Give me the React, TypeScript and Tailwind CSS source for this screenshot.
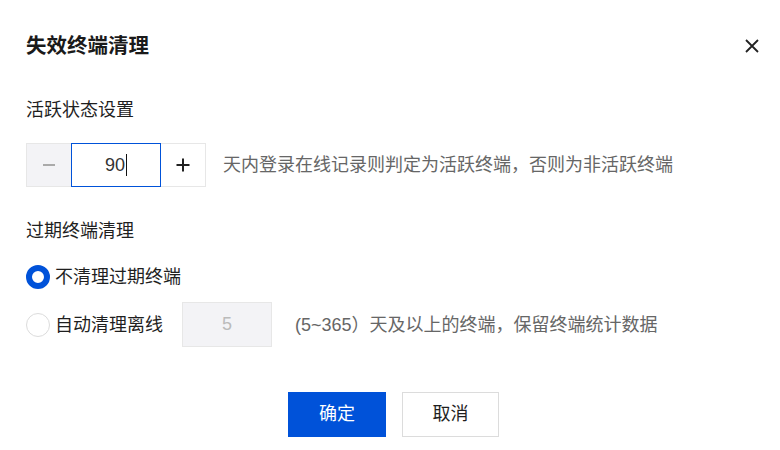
const font = "font-['Liberation_Sans','Noto_Sans_CJK_SC',sans-serif]";

const CloseIcon = () => (
  <svg width="16" height="16" viewBox="0 0 16 16" fill="none">
    <path d="M2 2L14 14M14 2L2 14" stroke="#222" strokeWidth="1.8" />
  </svg>
);

const Radio = ({ checked, label }: { checked?: boolean; label: string }) => (
  <div className="flex items-center gap-[5px]">
    {checked ? (
      <span className="h-6 w-6 rounded-full border-[6px] border-[#0052d9] bg-white" />
    ) : (
      <span className="h-6 w-6 rounded-full border border-[#dcdcdc] bg-white" />
    )}
    <span className="text-[18px] leading-[26px] text-[#1f1f1f]">{label}</span>
  </div>
);

export default function App() {
  return (
    <div className={`${font} h-[450px] w-[780px] bg-white`}>
      <div className="flex items-center justify-between pl-[26px] pr-[20px] pt-[32px]">
        <h1 className="text-[20.5px] font-bold leading-[28px] text-[#1a1a1a]">失效终端清理</h1>
        <CloseIcon />
      </div>

      <div className="px-[26px]">
        <div className="mt-[37px] text-[18px] leading-[26px] text-[#1f1f1f]">活跃状态设置</div>

        <div className="mt-[20px] flex items-center">
          <div className="flex h-[44px]">
            <div className="flex w-[45px] items-center justify-center border border-r-0 border-[#e7e7e7] bg-[#f3f3f6]">
              <span className="h-[2px] w-[12px] bg-[#aaaaaa]" />
            </div>
            <div className="flex w-[90px] items-center justify-center border border-[#0052d9] bg-white">
              <span className="text-[18px] text-[#333]">90</span>
              <span className="ml-[1px] h-[22px] w-px bg-[#111]" />
            </div>
            <div className="flex w-[45px] items-center justify-center border border-l-0 border-[#e7e7e7] bg-white">
              <svg width="14" height="14" viewBox="0 0 14 14">
                <path d="M7 0.5V13.5M0.5 7H13.5" stroke="#222" strokeWidth="2" />
              </svg>
            </div>
          </div>
          <span className="ml-[17px] text-[18px] leading-[26px] text-[#666]">
            天内登录在线记录则判定为活跃终端，否则为非活跃终端
          </span>
        </div>

        <div className="mt-[31px] text-[18px] leading-[26px] text-[#1f1f1f]">过期终端清理</div>

        <div className="mt-[20px]">
          <Radio checked label="不清理过期终端" />
        </div>

        <div className="mt-[12px] flex items-center">
          <Radio label="自动清理离线" />
          <div className="ml-[19px] flex h-[45px] w-[90px] items-center justify-center border border-[#e7e7e7] bg-[#f3f3f6] text-[18px] text-[#bbbbbb]">
            5
          </div>
          <span className="ml-[23px] text-[18px] leading-[26px] text-[#666]">
            (5~365）天及以上的终端，保留终端统计数据
          </span>
        </div>

        <div className="mt-[45px] flex justify-center gap-4 pl-[7px]">
          <button className="h-[45px] w-[98px] bg-[#0052d9] text-[18px] text-white">确定</button>
          <button className="h-[45px] w-[97px] border border-[#dcdcdc] bg-white text-[18px] text-[#1f1f1f]">
            取消
          </button>
        </div>
      </div>
    </div>
  );
}
